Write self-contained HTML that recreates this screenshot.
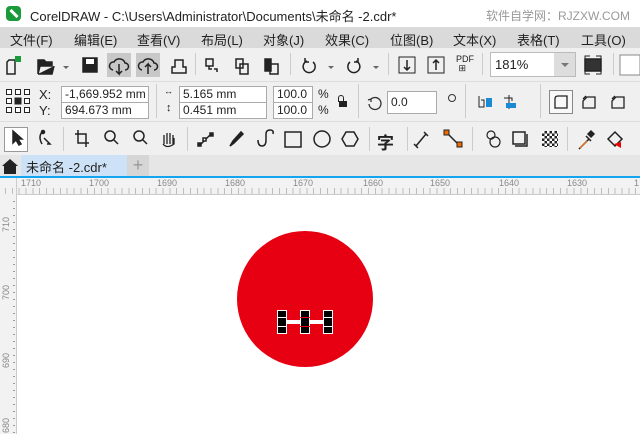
<!DOCTYPE html>
<html><head><meta charset="utf-8"><style>
*{margin:0;padding:0;box-sizing:border-box}
body{width:640px;height:434px;overflow:hidden;background:#f0f0f0;font-family:"Liberation Sans","Noto Sans CJK SC",sans-serif;position:relative;font-size:12px;color:#222}
.a{position:absolute}
.inp{position:absolute;background:#fff;border:1px solid #aaa;font-size:12px;padding-left:3px;line-height:15px;height:17px}
.menu span{position:absolute;top:3px;font-size:13px}
.ico{position:absolute;width:16px;height:16px}
.sep{position:absolute;width:1px;background:#ccc}
</style></head><body>
<!-- title -->
<div class="a" style="left:0;top:0;width:640px;height:27px;background:#fff"></div>
<div class="a" style="left:6px;top:6px;width:15px;height:15px;background:#1a9a3a;border-radius:4px"><div class="a" style="left:3px;top:6px;width:10px;height:3px;background:#fff;transform:rotate(45deg)"></div></div>
<div class="a" style="left:30px;top:6px;font-size:13px">CorelDRAW - C:\Users\Administrator\Documents\未命名 -2.cdr*</div>
<div class="a" style="left:486px;top:7px;font-size:12px;color:#999">软件自学网：RJZXW.COM</div>
<!-- menu -->
<div class="a menu" style="left:0;top:27px;width:640px;height:21px;background:#dadada">
<span style="left:10px">文件(F)</span><span style="left:74px">编辑(E)</span><span style="left:137px">查看(V)</span><span style="left:201px">布局(L)</span><span style="left:263px">对象(J)</span><span style="left:325px">效果(C)</span><span style="left:390px">位图(B)</span><span style="left:453px">文本(X)</span><span style="left:517px">表格(T)</span><span style="left:581px">工具(O)</span>
</div>
<!-- toolbar1 -->
<div class="a" style="left:107px;top:53px;width:24px;height:24px;background:#c8c8c8"></div>
<div class="a" style="left:136px;top:53px;width:24px;height:24px;background:#c8c8c8"></div>
<svg class="a" style="left:0;top:48px" width="640" height="32" fill="none" stroke="#222" stroke-width="1.5">
<path d="M9 12h6v14H7V14z"/><rect x="15" y="8" width="6" height="6" fill="#1a9a3a" stroke="none"/>
<path d="M38 12h6l2 2h6v4H40l-2 8zM38 26h14l2-8" fill="#222"/><path d="M63 18l3 3 3-3z" fill="#666" stroke="none"/>
<rect x="83" y="10" width="14" height="14" fill="#222"/><rect x="86" y="11" width="8" height="5" fill="#fff" stroke="none"/>
<path d="M113 22a4 4 0 0 1 1-8 6 6 0 0 1 11 1 3 3 0 0 1 0 7M119 16v10l-3-3M119 26l3-3"/>
<path d="M142 22a4 4 0 0 1 1-8 6 6 0 0 1 11 1 3 3 0 0 1 0 7M148 26v-10l-3 3M148 16l3 3"/>
<path d="M172 25h14v-6h-3v-7h-8v7h-3z"/>
<path d="M206 11h7v7h-7zM209 18v3h3M214 21h3v3"/>
<path d="M236 11h7v9h-7zM240 16h8v10h-8z"/>
<rect x="265" y="11" width="6" height="12" fill="#222"/><path d="M270 16h8v10h-8z"/>
<path d="M307 13a6 6 0 1 0 6 1M305 10l0 4h4"/><path d="M328 18l3 3 3-3z" fill="#666" stroke="none"/>
<path d="M356 13a6 6 0 1 1-6 1M358 10l0 4h-4"/><path d="M373 18l3 3 3-3z" fill="#666" stroke="none"/>
<rect x="399" y="9" width="16" height="16" stroke-width="1"/><path d="M407 12v10M404 19l3 3 3-3"/>
<rect x="428" y="9" width="16" height="16" stroke-width="1"/><path d="M436 22v-10M433 15l3-3 3 3"/>
<rect x="585" y="11" width="16" height="12" fill="#333"/>
<path d="M585 21v5h5M601 21v5h-5M585 13v-5h5M601 13v-5h-5" stroke-width="1"/>
<rect x="620" y="7" width="20" height="20" fill="#fff" stroke="#888" stroke-width="1"/>
</svg>
<div class="a" style="left:456px;top:55px;font-size:9px;line-height:9px">PDF<br>&nbsp;⊞</div>
<div class="a" style="left:490px;top:52px;width:86px;height:25px;background:#fff;border:1px solid #bbb"><span class="a" style="left:4px;top:4px;font-size:13px">181%</span><div class="a" style="right:0;top:0;width:21px;height:23px;background:#ddd"></div><div class="a" style="right:6px;top:10px;border:4px solid transparent;border-top-color:#777"></div></div>
<div class="sep" style="left:195px;top:53px;height:22px"></div><div class="sep" style="left:290px;top:53px;height:22px"></div><div class="sep" style="left:388px;top:53px;height:22px"></div><div class="sep" style="left:482px;top:53px;height:22px"></div><div class="sep" style="left:613px;top:53px;height:22px"></div>
<!-- property bar -->
<div class="a" style="left:0;top:81px;width:640px;height:1px;background:#ddd"></div>
<svg class="a" style="left:5px;top:88px" width="26" height="26" fill="#fff" stroke="#222"><rect x="1.5" y="1.5" width="5" height="5"/><rect x="10.5" y="1.5" width="5" height="5"/><rect x="19.5" y="1.5" width="5" height="5"/><rect x="1.5" y="10.5" width="5" height="5"/><rect x="10" y="10" width="6" height="6" fill="#222"/><rect x="19.5" y="10.5" width="5" height="5"/><rect x="1.5" y="19.5" width="5" height="5"/><rect x="10.5" y="19.5" width="5" height="5"/><rect x="19.5" y="19.5" width="5" height="5"/></svg>
<div class="a" style="left:39px;top:87px;font-size:13px">X:</div><div class="a" style="left:39px;top:103px;font-size:13px">Y:</div>
<div class="inp" style="left:61px;top:86px;width:88px">-1,669.952 mm</div>
<div class="inp" style="left:61px;top:102px;width:88px">694.673 mm</div>
<div class="sep" style="left:156px;top:84px;height:34px"></div>
<div class="a" style="left:164px;top:86px;font-size:9px">↔</div><div class="a" style="left:166px;top:102px;font-size:11px">↕</div>
<div class="inp" style="left:179px;top:86px;width:88px">5.165 mm</div>
<div class="inp" style="left:179px;top:102px;width:88px">0.451 mm</div>
<div class="inp" style="left:273px;top:86px;width:40px">100.0</div>
<div class="inp" style="left:273px;top:102px;width:40px">100.0</div>
<div class="a" style="left:318px;top:87px">%</div><div class="a" style="left:318px;top:103px">%</div>
<div class="a" style="left:339px;top:101px;width:8px;height:6px;background:#222"></div><div class="a" style="left:338px;top:95px;width:6px;height:7px;border:1.5px solid #222;border-bottom:none;border-radius:3px 3px 0 0"></div>
<div class="sep" style="left:358px;top:84px;height:34px"></div>
<svg class="a" style="left:366px;top:94px" width="18" height="18" fill="none" stroke="#333" stroke-width="1.3"><path d="M5 5a6 6 0 1 1-2 5M2 6l3-1 0 3"/></svg>
<div class="inp" style="left:387px;top:91px;width:50px;height:23px;line-height:21px">0.0</div>
<div class="a" style="left:448px;top:94px;width:8px;height:8px;border:1.3px solid #333;border-radius:50%"></div>
<div class="sep" style="left:465px;top:84px;height:34px"></div>
<svg class="a" style="left:476px;top:92px" width="60" height="20"><path d="M3 4v11h5V8H5" stroke="#222" fill="none"/><rect x="10" y="6" width="6" height="9" fill="#1a8ad4"/><path d="M33 3v14" stroke="#222"/><rect x="30" y="11" width="10" height="5" fill="#1a8ad4"/><path d="M28 6h8v3" stroke="#222" fill="none"/></svg>
<div class="sep" style="left:540px;top:84px;height:34px"></div>
<div class="a" style="left:549px;top:90px;width:24px;height:24px;border:1px solid #888;background:#f8f8f8"></div>
<svg class="a" style="left:549px;top:90px" width="91" height="24" fill="none" stroke="#222" stroke-width="1.3"><path d="M6 18V9q0-3 3-3h9v12z"/><path d="M34 18V11l4-4h8v11zM34 9l3-3"/><path d="M63 18V11l4-4h8v11zM63 9l3-3"/></svg>
<!-- toolbox -->
<div class="a" style="left:0;top:121px;width:640px;height:1px;background:#ddd"></div>
<div class="a" style="left:4px;top:127px;width:24px;height:25px;border:1px solid #999;background:#fff"></div>
<svg class="a" style="left:0;top:122px" width="640" height="33" fill="none" stroke="#222" stroke-width="1.5">
<path d="M13 9v12l3-3 3 5 2-1-3-5h4z" fill="#222"/>
<path d="M42 10q-4 5 0 12M44 16l6 6-3 0" /><circle cx="43" cy="10" r="1.5" fill="#222"/>
<path d="M78 8v13h11M75 12h11v13"/>
<circle cx="110" cy="14" r="5"/><path d="M114 18l4 4"/>
<circle cx="139" cy="14" r="5"/><path d="M143 18l4 4"/>
<path d="M164 22v-9M167 22v-11M170 22v-11M173 22v-9M163 22q4 5 11 0v-6" stroke-width="1.3"/>
<path d="M200 23l10-10"/><rect x="198" y="21" width="3" height="3" fill="#222"/><rect x="203" y="16" width="3" height="3" fill="#fff"/><rect x="210" y="11" width="3" height="3" fill="#222"/>
<path d="M230 24l3-5 8-9 2 2-9 9z" fill="#222"/>
<path d="M258 18q0 6 4 6t4-6v-6q0-4 4-4t3 4" />
<rect x="285" y="10" width="16" height="15"/>
<circle cx="322" cy="17" r="8"/>
<path d="M346 10h8l4 7-4 7h-8l-4-7z"/>
<path d="M416 24l10-12"/><path d="M414 22l4 4M424 10l4 4"/>
<path d="M447 11l12 12"/><rect x="444" y="8" width="5" height="5" fill="#f06a00" stroke="#222" stroke-width="1"/><rect x="457" y="20" width="5" height="5" fill="#f06a00" stroke="#222" stroke-width="1"/>
<circle cx="491" cy="13" r="4" stroke-width="1.2"/><circle cx="495" cy="20" r="5" stroke-width="1.2"/>
<rect x="513" y="10" width="12" height="12"/><path d="M527 12v12h-12"/>
<rect x="542" y="9" width="16" height="16" fill="#222" stroke="none"/>
<path d="M579 27l10-10M586 14l5 5" stroke="#222"/><path d="M580 26l7-7" stroke="#e07020"/><path d="M588 12l3-3 3 3-3 3z" fill="#222"/>
<path d="M608 17l7-7 7 7-7 7z"/><path d="M614 22l7-2 0 6z" fill="#e00" stroke="none"/>
</svg>
<div class="a" style="left:542px;top:131px;width:16px;height:16px;background:repeating-conic-gradient(#222 0 25%,#fff 0 50%) 0 0/5px 5px"></div>
<div class="a" style="left:377px;top:129px;font-size:17px;font-weight:bold">字</div>
<div class="sep" style="left:63px;top:127px;height:24px"></div><div class="sep" style="left:187px;top:127px;height:24px"></div><div class="sep" style="left:369px;top:127px;height:24px"></div><div class="sep" style="left:407px;top:127px;height:24px"></div><div class="sep" style="left:472px;top:127px;height:24px"></div><div class="sep" style="left:567px;top:127px;height:24px"></div>
<!-- tabs -->
<div class="a" style="left:0;top:155px;width:640px;height:21px;background:#e6e6e6"></div>
<svg class="a" style="left:1px;top:157px" width="18" height="18"><path d="M1 9l8-7 8 7h-2v8H3V9z" fill="#222"/></svg>
<div class="a" style="left:21px;top:155px;width:106px;height:21px;background:#cde2f7"></div>
<div class="a" style="left:26px;top:157px;font-size:13px">未命名 -2.cdr*</div>
<div class="a" style="left:127px;top:155px;width:22px;height:21px;background:#d6d6d6;color:#999;font-size:18px;text-align:center;line-height:20px">+</div>
<div class="a" style="left:0;top:176px;width:640px;height:2px;background:#12a5f0"></div>
<!-- rulers -->
<div class="a" style="left:0;top:178px;width:640px;height:17px;background:#f2f2f2;border-bottom:1px solid #ccc"></div>
<div class="a" style="left:0;top:178px;width:17px;height:256px;background:#f2f2f2;border-right:1px solid #ccc"></div>
<div class="a" style="left:17px;top:195px;width:623px;height:239px;background:#fff"></div>
<div class="a" style="left:0;top:178px;width:640px;height:12px;font-size:9px;color:#888">
<span class="a" style="left:21px">1710</span><span class="a" style="left:89px">1700</span><span class="a" style="left:157px">1690</span><span class="a" style="left:225px">1680</span><span class="a" style="left:293px">1670</span><span class="a" style="left:363px">1660</span><span class="a" style="left:430px">1650</span><span class="a" style="left:499px">1640</span><span class="a" style="left:567px">1630</span><span class="a" style="left:634px">1</span></div>
<div class="a" style="left:0;top:188px;width:640px;height:6px;background:repeating-linear-gradient(90deg,transparent 0 5px,#888 5px 6px,transparent 6px 6.85px);opacity:.5"></div>
<div class="a" style="left:1px;top:207px;font-size:9px;color:#888;transform:rotate(-90deg);transform-origin:left top;top:232px">710</div>
<div class="a" style="left:1px;top:300px;font-size:9px;color:#888;transform:rotate(-90deg);transform-origin:left top">700</div>
<div class="a" style="left:1px;top:368px;font-size:9px;color:#888;transform:rotate(-90deg);transform-origin:left top">690</div>
<div class="a" style="left:1px;top:433px;font-size:9px;color:#888;transform:rotate(-90deg);transform-origin:left top">680</div>
<div class="a" style="left:13px;top:195px;width:2px;height:239px;background:repeating-linear-gradient(180deg,transparent 0 6px,#999 6px 7px)"></div>
<!-- circle -->
<div class="a" style="left:237px;top:231px;width:136px;height:136px;border-radius:50%;background:#e60012"></div>
<div class="a" style="left:286px;top:320px;width:40px;height:4px;background:#fff"></div>
<div class="a" style="left:277px;top:310px;width:10px;height:24px;background:#000;border:1px solid #fff"></div>
<div class="a" style="left:300px;top:310px;width:10px;height:24px;background:#000;border:1px solid #fff"></div>
<div class="a" style="left:323px;top:310px;width:10px;height:24px;background:#000;border:1px solid #fff"></div>
<div class="a" style="left:277px;top:317px;width:10px;height:1px;background:#fff"></div><div class="a" style="left:277px;top:326px;width:10px;height:1px;background:#fff"></div>
<div class="a" style="left:300px;top:317px;width:10px;height:1px;background:#e60012"></div><div class="a" style="left:300px;top:326px;width:10px;height:1px;background:#e60012"></div>
<div class="a" style="left:323px;top:317px;width:10px;height:1px;background:#fff"></div><div class="a" style="left:323px;top:326px;width:10px;height:1px;background:#fff"></div>
</body></html>
